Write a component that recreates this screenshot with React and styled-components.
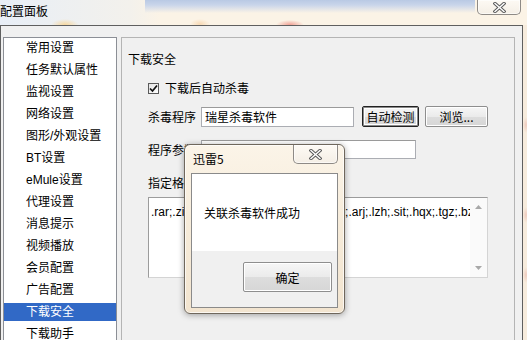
import React from "react";
import styled, { createGlobalStyle } from "styled-components";

const Global = createGlobalStyle`
  html, body { margin: 0; padding: 0; background: #f8efe2; }
  body { font-family: "Liberation Sans", "Noto Sans CJK SC", sans-serif; font-size: 12px; color: #000; }
`;

const Window = styled.div`
  position: relative;
  width: 527px;
  height: 340px;
  overflow: hidden;
  display: flex;
  flex-direction: column;
  background: #f8efe2;
`;

const TitleBar = styled.div`
  height: 25px;
  flex: none;
  display: flex;
  justify-content: space-between;
  align-items: flex-start;
  background-image:
    radial-gradient(ellipse 14px 6px at 65px 25px, rgba(255, 196, 90, 0.55), rgba(255, 196, 90, 0)),
    radial-gradient(ellipse 14px 5px at 290px 25px, rgba(232, 90, 80, 0.55), rgba(232, 90, 80, 0)),
    radial-gradient(ellipse 10px 5px at 200px 24px, rgba(240, 170, 90, 0.35), rgba(240, 170, 90, 0)),
    linear-gradient(to bottom, #b9c9e4 0px, #c9d5ea 5px, rgba(251, 243, 230, 0) 13px),
    linear-gradient(to right, #e8eef6 0px, #f3f1ec 130px, #fbf3e6 160px, #fbf3e6 100%);
  background-size: 100% 100%, 100% 100%, 100% 100%, 330px 16px, 100% 100%;
  background-position: 0 0, 0 0, 0 0, 145px 0, 0 0;
  background-repeat: no-repeat;
`;

const TitleText = styled.div`
  padding-top: 3px;
  font-family: "Noto Sans CJK SC", sans-serif;
  font-size: 12px;
  line-height: 16px;
  color: #000;
`;

const CloseButton = styled.div`
  flex: none;
  width: ${p => p.$w || 44}px;
  height: ${p => p.$h || 15}px;
  margin-right: ${p => p.$mr ?? 6}px;
  box-sizing: border-box;
  border: 1px solid #8e8a86;
  border-top: none;
  border-radius: 0 0 5px 5px;
  background: linear-gradient(to bottom, rgba(255,255,255,0.55), rgba(240,236,230,0.6));
  box-shadow: inset 0 0 0 1px rgba(255,255,255,0.6);
  display: flex;
  align-items: center;
  justify-content: center;
`;

const XGlyph = () => (
  <svg width="13" height="11" viewBox="0 0 13 11">
    <path d="M2 1.5 L11 9.5 M11 1.5 L2 9.5" stroke="#5b5b5b" strokeWidth="3.4" strokeLinecap="square" fill="none" />
    <path d="M2 1.5 L11 9.5 M11 1.5 L2 9.5" stroke="#ffffff" strokeWidth="1.4" strokeLinecap="square" fill="none" />
  </svg>
);

const BodyRow = styled.div`
  flex: 1;
  display: flex;
  min-height: 0;
`;

const Client = styled.div`
  flex: none;
  width: 523px;
  box-sizing: border-box;
  border: 1px solid #5f5f5f;
  border-bottom: none;
  background: #f0f0f0;
  padding: 11px 7px 0 2px;
  display: flex;
  gap: 4px;
  align-items: flex-start;
  overflow: hidden;
`;

const RightFrame = styled.div`
  flex: 1;
  background:
    radial-gradient(ellipse 3px 8px at 3px 100px, rgba(230,170,160,0.5), rgba(230,170,160,0)),
    radial-gradient(ellipse 3px 8px at 3px 190px, rgba(230,170,160,0.5), rgba(230,170,160,0)),
    radial-gradient(ellipse 3px 8px at 3px 250px, rgba(230,170,160,0.5), rgba(230,170,160,0)),
    #f7ecdd;
`;

const NavList = styled.div`
  flex: none;
  width: 114px;
  min-height: 330px;
  box-sizing: border-box;
  border: 1px solid #8c8f96;
  background: #fff;
  padding-top: 1px;
`;

const NavItem = styled.div`
  height: 18px;
  line-height: 18px;
  margin-bottom: 4px;
  padding-left: 22px;
  font-family: "Liberation Sans", "Noto Sans CJK SC", sans-serif;
  font-size: 12px;
  white-space: nowrap;
  background: ${p => (p.$active ? "#3169c6" : "transparent")};
  color: ${p => (p.$active ? "#fff" : "#000")};
`;

const Group = styled.div`
  flex: 1;
  min-height: 330px;
  box-sizing: border-box;
  border: 1px solid #b4b4b4;
  padding: 12px 0 0 6px;
  display: flex;
  flex-direction: column;
  align-items: flex-start;
`;

const Heading = styled.div`
  height: 18px;
  line-height: 18px;
  font-family: "Noto Sans CJK SC", sans-serif;
`;

const Indented = styled.div`
  margin-left: 20px;
  margin-top: ${p => p.$mt || 0}px;
  display: flex;
  align-items: center;
  height: ${p => p.$h || 18}px;
`;

const Check = styled.div`
  width: 11px;
  height: 11px;
  box-sizing: border-box;
  border: 1px solid #5a5a5a;
  background: linear-gradient(135deg, #e4e4e4, #ffffff);
  display: flex;
  align-items: center;
  justify-content: center;
  margin-right: 6px;
`;

const Label = styled.span`
  font-family: "Noto Sans CJK SC", sans-serif;
  line-height: 18px;
  white-space: nowrap;
  margin-right: ${p => p.$mr || 0}px;
`;

const TextInput = styled.div`
  width: ${p => p.$w}px;
  height: ${p => p.$h}px;
  box-sizing: border-box;
  border: 1px solid #abadb3;
  border-top-color: #9a9a9a;
  background: #fff;
  padding-left: 3px;
  line-height: ${p => p.$h - 2}px;
  font-family: "Noto Sans CJK SC", sans-serif;
  white-space: nowrap;
`;

const Button = styled.div`
  width: ${p => p.$w}px;
  height: ${p => p.$h || 21}px;
  margin-left: ${p => p.$ml || 0}px;
  box-sizing: border-box;
  border: 1px solid ${p => (p.$default ? "#222" : "#8e8e8e")};
  box-shadow: ${p => (p.$default ? "inset 0 0 0 1px #8a8a8a, inset 0 0 0 2px #fff" : "inset 0 0 0 1px #fff")};
  border-radius: 2px;
  background: linear-gradient(to bottom, #f6f6f6 0%, #ebebeb 50%, #dddddd 51%, #d6d6d6 100%);
  display: flex;
  align-items: center;
  justify-content: center;
  font-family: "Noto Sans CJK SC", sans-serif;
  white-space: nowrap;
`;

const TextArea = styled.div`
  margin-left: 20px;
  margin-top: 5px;
  width: 340px;
  height: 81px;
  box-sizing: border-box;
  border: 1px solid #9c9c9c;
  border-right-color: #d4d4d4;
  border-bottom-color: #d4d4d4;
  background: #fff;
  display: flex;
`;

const AreaText = styled.div`
  flex: 1;
  overflow: hidden;
  white-space: nowrap;
  padding: 6px 0 0 2px;
  line-height: 16px;
  font-family: "Liberation Sans", sans-serif;
  font-size: 12px;
`;

const ScrollBar = styled.div`
  flex: none;
  width: 17px;
  background: #fafafa;
  display: flex;
  flex-direction: column;
  justify-content: space-between;
  align-items: center;
  padding: 7px 0 7px;
`;

const Arrow = ({ up }) => (
  <svg width="7" height="4" viewBox="0 0 7 4">
    <path d={up ? "M0 4 L3.5 0 L7 4 Z" : "M0 0 L3.5 4 L7 0 Z"} fill="#a8a8a8" />
  </svg>
);

const Dialog = styled.div`
  position: absolute;
  left: 184px;
  top: 144px;
  width: 161px;
  height: 170px;
  box-sizing: border-box;
  border: 1px solid #6f675c;
  border-radius: 6px;
  background: linear-gradient(to bottom, #fbf4e8 0%, #f6ebd9 50%, #f2e4cf 100%);
  box-shadow: 0 1px 6px rgba(0, 0, 0, 0.35), inset 0 0 0 1px rgba(255, 255, 255, 0.7);
  display: flex;
  flex-direction: column;
`;

const DialogTitleRow = styled.div`
  height: 28px;
  flex: none;
  display: flex;
  justify-content: space-between;
  align-items: flex-start;
  padding-left: 8px;
`;

const DialogTitle = styled.div`
  padding-top: 6px;
  line-height: 16px;
  font-family: "Noto Sans CJK SC", sans-serif;
`;

const DialogClient = styled.div`
  margin: 0 6px 5px 6px;
  flex: 1;
  border: 1px solid #8a8a8a;
  display: flex;
  flex-direction: column;
`;

const DialogMessage = styled.div`
  height: 77px;
  background: #fff;
  padding: 30px 0 0 12px;
  box-sizing: border-box;
  line-height: 18px;
  font-family: "Noto Sans CJK SC", sans-serif;
`;

const DialogFooter = styled.div`
  flex: 1;
  background: #f0f0f0;
  display: flex;
  justify-content: flex-end;
  align-items: flex-start;
  padding: 11px 5px 0 0;
`;

const navItems = [
  "常用设置", "任务默认属性", "监视设置", "网络设置", "图形/外观设置", "BT设置",
  "eMule设置", "代理设置", "消息提示", "视频播放", "会员配置", "广告配置", "下载安全", "下载助手",
];

export default function App() {
  return (
    <>
      <Global />
      <Window>
        <TitleBar>
          <TitleText>配置面板</TitleText>
          <CloseButton><XGlyph /></CloseButton>
        </TitleBar>
        <BodyRow>
          <Client>
            <NavList>
              {navItems.map(n => (
                <NavItem key={n} $active={n === "下载安全"}>{n}</NavItem>
              ))}
            </NavList>
            <Group>
              <Heading>下载安全</Heading>
              <Indented $mt={11}>
                <Check>
                  <svg width="9" height="9" viewBox="0 0 9 9">
                    <path d="M1 4.5 L3.5 7 L8 1.5" stroke="#111" strokeWidth="1.7" fill="none" />
                  </svg>
                </Check>
                <Label>下载后自动杀毒</Label>
              </Indented>
              <Indented $mt={9} $h={21}>
                <Label $mr={5}>杀毒程序</Label>
                <TextInput $w={153} $h={20}>瑞星杀毒软件</TextInput>
                <Button $w={57} $ml={8} $default>自动检测</Button>
                <Button $w={63} $ml={6}>浏览...</Button>
              </Indented>
              <Indented $mt={13} $h={19}>
                <Label $mr={5}>程序参数</Label>
                <TextInput $w={215} $h={19}></TextInput>
              </Indented>
              <Indented $mt={15}>
                <Label>指定格式文件</Label>
              </Indented>
              <TextArea>
                <AreaText>.rar;.zip;.7z;.exe;.cab;.iso;.tar;.Z;.ace;.arj;.lzh;.sit;.hqx;.tgz;.bz2;.uue</AreaText>
                <ScrollBar>
                  <Arrow up />
                  <Arrow />
                </ScrollBar>
              </TextArea>
            </Group>
          </Client>
          <RightFrame />
        </BodyRow>
        <Dialog>
          <DialogTitleRow>
            <DialogTitle>迅雷5</DialogTitle>
            <CloseButton $w={45} $h={19} $mr={6}><XGlyph /></CloseButton>
          </DialogTitleRow>
          <DialogClient>
            <DialogMessage>关联杀毒软件成功</DialogMessage>
            <DialogFooter>
              <Button $w={89} $h={30}>确定</Button>
            </DialogFooter>
          </DialogClient>
        </Dialog>
      </Window>
    </>
  );
}
